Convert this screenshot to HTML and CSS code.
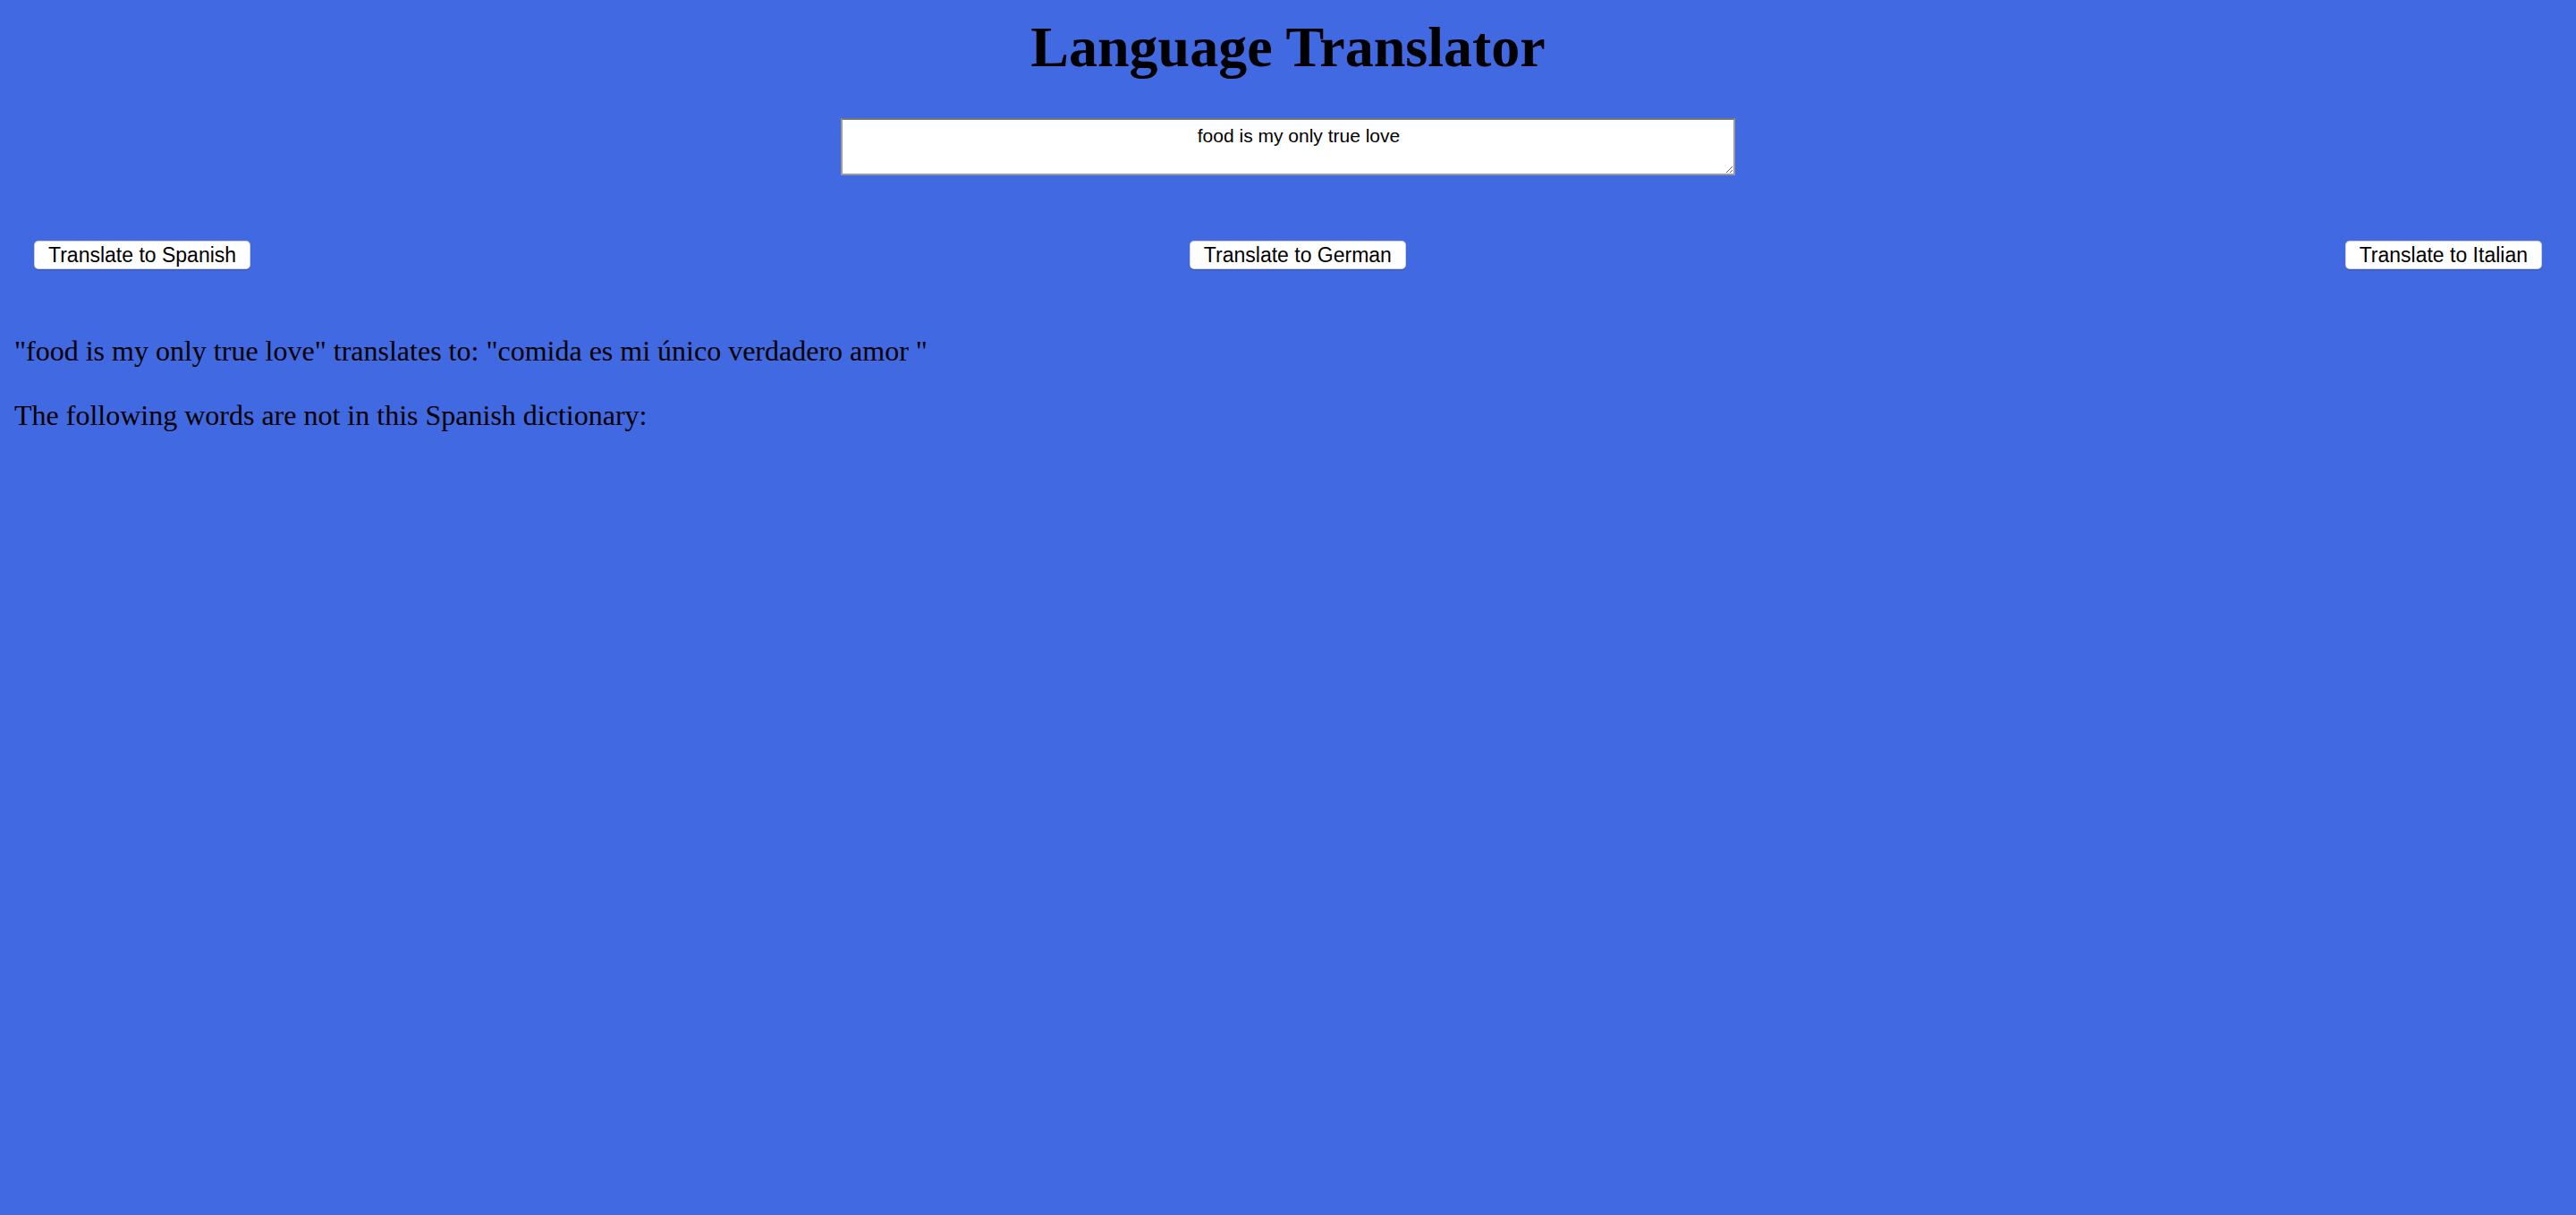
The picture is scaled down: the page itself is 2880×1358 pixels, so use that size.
FILE: index.html
```html
<!DOCTYPE html>
<html lang="en">
<head>
<meta charset="utf-8">
<title>Language Translator</title>
<link rel="stylesheet" href="styles.css">
</head>
<body>
  <h1 class="title">Language Translator</h1>
  <div class="input-wrap">
    <textarea class="source">food is my only true love</textarea>
  </div>
  <div class="actions">
    <button class="btn" type="button">Translate to Spanish</button>
    <button class="btn" type="button">Translate to German</button>
    <button class="btn" type="button">Translate to Italian</button>
  </div>
  <div class="results">
    <p class="result-line">"food is my only true love" translates to: "comida es mi único verdadero amor "</p>
    <p class="result-line">The following words are not in this Spanish dictionary:</p>
  </div>
</body>
</html>
```

FILE: styles.css
```css
html, body {
  margin: 0;
  padding: 0;
}

body {
  background: #4169e1;
  min-height: 1358px;
  font-family: "Liberation Serif", "Times New Roman", serif;
  color: #000;
}

.title {
  margin: 17px 0 0;
  font-family: "Liberation Serif", "Times New Roman", serif;
  font-weight: bold;
  font-size: 64px;
  line-height: 72px;
  text-align: center;
}

.input-wrap {
  display: flex;
  justify-content: center;
  margin-top: 43px;
}

.source {
  box-sizing: border-box;
  width: 1000px;
  height: 64px;
  margin: 0;
  padding: 6px 2px 2px 26px;
  border: 2px solid #9a9a9a;
  border-top-color: #767676;
  background: #fff;
  color: #000;
  font-family: "Liberation Sans", Arial, sans-serif;
  font-size: 21px;
  line-height: 24px;
  text-align: center;
  outline: none;
}

.actions {
  display: flex;
  justify-content: space-between;
  align-items: center;
  margin-top: 73px;
  padding: 0 38px;
}

.btn {
  box-sizing: border-box;
  height: 32px;
  margin: 0;
  padding: 0 15px;
  background: #fff;
  color: #000;
  border: 1px solid rgba(0, 0, 0, 0.18);
  border-radius: 5px;
  box-shadow: 0 1px 1px rgba(0, 0, 0, 0.2);
  font-family: "Liberation Sans", Arial, sans-serif;
  font-size: 23px;
  line-height: 30px;
}

.results {
  padding: 39px 16px 0;
}

.result-line {
  margin: 32px 0;
  font-size: 32px;
  line-height: 40px;
}
```
